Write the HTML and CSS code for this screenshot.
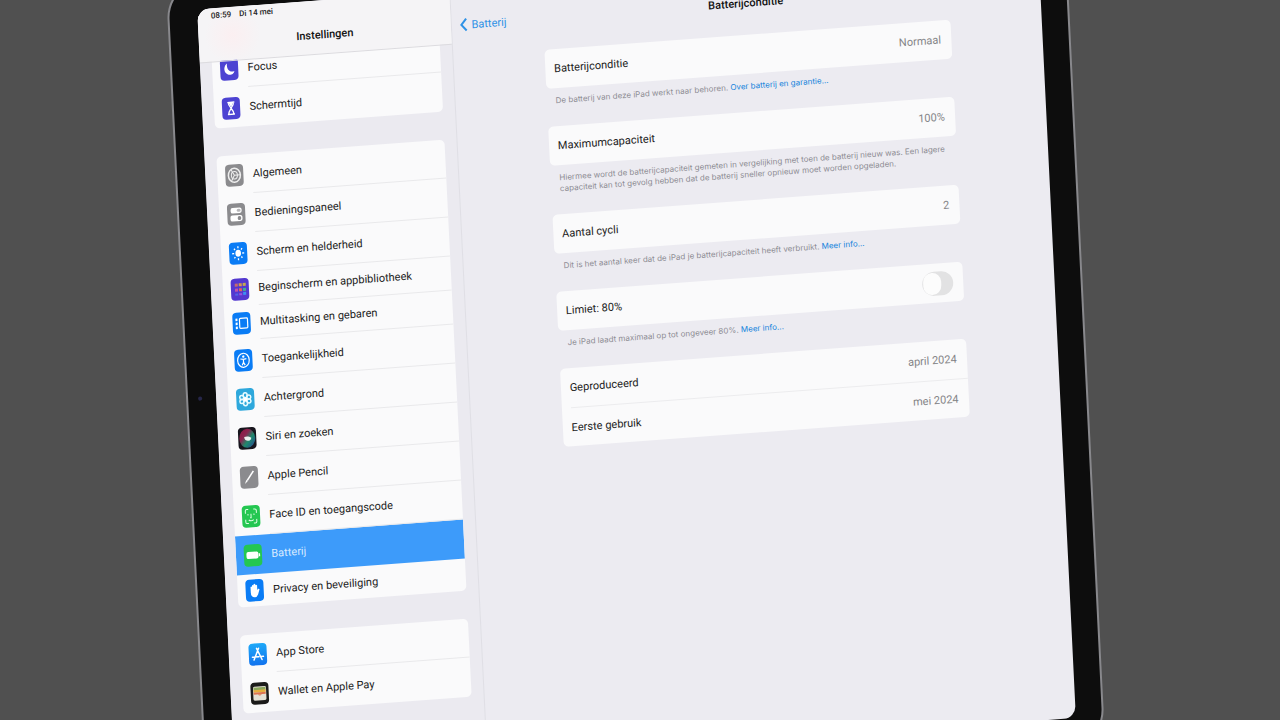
FILE: index.html
```
<!DOCTYPE html>
<html lang="nl">
<head>
    <meta charset="UTF-8">
    <meta name="viewport" content="width=device-width, initial-scale=1.0">
    <title>Batterijconditie</title>
    <link rel="stylesheet" href="styles.css">
</head>
<body>
    <div class="stage">
        <div class="device">
            <div class="screen">
                <aside class="sidebar">
                    <header class="sidebar-header">
                        <div class="status"><span>08:59</span><span>Di 14 mei</span></div>
                        <h2>Instellingen</h2>
                    </header>
                    <nav class="menu">
                        <div class="group">
                            <a class="item" href="#">
                                <svg class="icon indigo" viewBox="0 0 18 22"><path d="M7 5c-3 2-4 7-1 10 3 3 8 1 8-2-4 2-8-2-7-8z" fill="#fff"/></svg>
                                <span>Focus</span>
                            </a>
                            <a class="item" href="#">
                                <svg class="icon indigo" viewBox="0 0 18 22"><path d="M5.500 5h7M5.500 17h7M6.500 5.500c0 3 2 4 2.500 5.500-.5 1.500-2.500 2.500-2.500 5.500M11.500 5.500c0 3-2 4-2.500 5.500.5 1.500 2.500 2.500 2.500 5.500" fill="none" stroke="#fff" stroke-width="1.300"/><path d="M6.500 5h5L9.500 9h-1z" fill="#fff"/></svg>
                                <span>Schermtijd</span>
                            </a>
                        </div>
                        <div class="group">
                            <a class="item" href="#">
                                <svg class="icon gray" viewBox="0 0 18 22"><g fill="none" stroke="#eee"><ellipse cx="9" cy="11" rx="6" ry="7" stroke-width="1.500"/><ellipse cx="9" cy="11" rx="3" ry="3.800"/><path d="M9 11h6M9 11L6 5.500M9 11l-3 5.500"/></g></svg>
                                <span>Algemeen</span>
                            </a>
                            <a class="item" href="#">
                                <svg class="icon gray" viewBox="0 0 18 22"><rect x="3.500" y="4.500" width="11" height="5.500" rx="2" fill="#fff"/><ellipse cx="11.500" cy="7.200" rx="2" ry="1.500" fill="#b5b5b8"/><rect x="3" y="12" width="12" height="6" rx="2" fill="#fff"/><ellipse cx="12" cy="15" rx="1.800" ry="2" fill="#8b8b8e"/></svg>
                                <span>Bedieningspaneel</span>
                            </a>
                            <a class="item" href="#">
                                <svg class="icon blue" viewBox="0 0 18 22"><ellipse cx="9" cy="11" rx="2.800" ry="3.500" fill="#fff"/><path d="M9 4v2M9 16v2M3 11h2M13 11h2M5 6.200l1 1.300M13 6.200l-1 1.300M5 15.800l1-1.300M13 15.800l-1-1.300" stroke="#fff" stroke-width="1.300"/></svg>
                                <span>Scherm en helderheid</span>
                            </a>
                            <a class="item short" href="#">
                                <svg class="icon violet" viewBox="0 0 18 22"><path d="M4 5h3v3H4z" fill="#c76b6b"/><path d="M8 5h3v3H8z" fill="#d69a4c"/><path d="M12 5h3v3h-3z" fill="#c2a850"/><path d="M4 10h3v3H4z" fill="#c354a8"/><path d="M8 10h3v3H8z" fill="#e0645c"/><path d="M12 10h3v3h-3z" fill="#3fae8f"/><path d="M4 15h3v2H4z" fill="#5065e8"/><path d="M8 15h3v2H8z" fill="#9a50e0"/><path d="M12 14h3v3h-3z" fill="#3e8df2"/></svg>
                                <span>Beginscherm en appbibliotheek</span>
                            </a>
                            <a class="item short" href="#">
                                <svg class="icon blue" viewBox="0 0 18 22"><rect x="7" y="6" width="8" height="10" rx="1" fill="none" stroke="#fff" stroke-width="1.200"/><path d="M3 6h2v2.500H3zM3 10h2v2.500H3zM3 14h2v2.500H3z" fill="#fff"/></svg>
                                <span>Multitasking en gebaren</span>
                            </a>
                            <a class="item" href="#">
                                <svg class="icon blue" viewBox="0 0 18 22"><ellipse cx="9" cy="11" rx="5.800" ry="7" fill="none" stroke="#fff" stroke-width="1.200"/><circle cx="9" cy="7.300" r="1.200" fill="#fff"/><path d="M6 9.500l3 .5 3-.5M9 10v3l-1.500 3M9 13l1.500 3" fill="none" stroke="#fff" stroke-width="1.200"/></svg>
                                <span>Toegankelijkheid</span>
                            </a>
                            <a class="item" href="#">
                                <svg class="icon cyan" viewBox="0 0 18 22"><g fill="none" stroke="#e6fbff" stroke-width="1.500"><ellipse cx="9" cy="7" rx="2" ry="2.500"/><ellipse cx="9" cy="15" rx="2" ry="2.500"/><ellipse cx="5.500" cy="9" rx="2" ry="2"/><ellipse cx="12.500" cy="9" rx="2" ry="2"/><ellipse cx="5.500" cy="13" rx="2" ry="2"/><ellipse cx="12.500" cy="13" rx="2" ry="2"/></g><circle cx="9" cy="11" r="2" fill="#fff"/></svg>
                                <span>Achtergrond</span>
                            </a>
                            <a class="item" href="#">
                                <svg class="icon dark" viewBox="0 0 18 22">
                                    <defs>
                                        <linearGradient id="siri" x1="0" y1="0" x2="1" y2="1">
                                            <stop offset="0" stop-color="#8c1440"/>
                                            <stop offset=".35" stop-color="#8a2450"/>
                                            <stop offset=".6" stop-color="#1f8a6c"/>
                                            <stop offset="1" stop-color="#28409a"/>
                                        </linearGradient>
                                    </defs>
                                    <ellipse cx="9" cy="11" rx="8" ry="9.500" fill="url(#siri)"/><path d="M6 9.500c3-1 5 0 7 1 0 2-1 3-3 3-2 0-4-1-4-4z" fill="#fff" opacity=".9"/>
                                </svg>
                                <span>Siri en zoeken</span>
                            </a>
                            <a class="item" href="#">
                                <svg class="icon gray" viewBox="0 0 18 22"><path d="M13.500 5L7 14" stroke="#fff" stroke-width="1.600"/><path d="M7.800 14.500L4.500 17.500l1.500-4z" fill="#fff"/></svg>
                                <span>Apple Pencil</span>
                            </a>
                            <a class="item" href="#">
                                <svg class="icon green" viewBox="0 0 18 22"><path d="M3.500 8V5.500Q3.500 4 5 4h1.500M11.500 4H13q1.500 0 1.500 1.500V8M3.500 14v2.500Q3.500 18 5 18h1.500M11.500 18H13q1.500 0 1.500-1.500V14M6 8.500v1.500M12 8.500v1.500M9 8.500v4H8M6.500 14.500q2.500 2 5 0" fill="none" stroke="#dfffe4"/></svg>
                                <span>Face ID en toegangscode</span>
                            </a>
                            <a class="item selected" href="#">
                                <svg class="icon green" viewBox="0 0 18 22"><rect x="2.500" y="7.500" width="12" height="7" rx="2" fill="#fff"/><path d="M15.500 9.500v3" stroke="#fff" stroke-width="1.300"/></svg>
                                <span>Batterij</span>
                            </a>
                            <a class="item last" href="#">
                                <svg class="icon blue" viewBox="0 0 18 22"><path d="M5 11V7.500q.8-.8 1.500 0V6q.8-1 1.600 0V5q.9-1 1.800 0v1q.9-.8 1.700.2V11l1-1.200q1.200-.3 1.200.8l-1.600 4.800Q11 18 9 18q-4 0-4-5z" fill="#fff"/></svg>
                                <span>Privacy en beveiliging</span>
                            </a>
                        </div>
                        <div class="group">
                            <a class="item" href="#">
                                <svg class="icon sky" viewBox="0 0 18 22"><path d="M10 5L5 16.500M8 5l5 11.500M3.500 13.500h6.500M12 13.500h2.500" fill="none" stroke="#fff" stroke-width="1.500" stroke-linecap="round"/></svg>
                                <span>App Store</span>
                            </a>
                            <a class="item" href="#">
                                <svg class="icon wallet" viewBox="0 0 18 22"><rect x="2.500" y="4" width="13" height="14" rx="1.500" fill="#e4e0d4"/><path d="M3 5h12v3H3z" fill="#8aa55c"/><path d="M3 7.500h12v2.500H3z" fill="#e5ae3c"/><path d="M3 10h12v2H3z" fill="#dc7350"/><path d="M7 12h4q-2 2.500-4 0z" fill="#dc7350"/></svg>
                                <span>Wallet en Apple Pay</span>
                            </a>
                        </div>
                    </nav>
                </aside>
                <main class="pane">
                    <header class="pane-header">
                        <a class="back" href="#"><svg viewBox="0 0 8 14"><path d="M6.500 1L1.500 7l5 6" fill="none" stroke="#2f92e6" stroke-width="2"/></svg>Batterij</a>
                        <h1>Batterijconditie</h1>
                    </header>
                    <div class="content">
                        <section class="card">
                            <div class="row"><span>Batterijconditie</span><span class="value">Normaal</span></div>
                        </section>
                        <p class="note">De batterij van deze iPad werkt naar behoren. <a href="#">Over batterij en garantie...</a></p>
                        <section class="card">
                            <div class="row"><span>Maximumcapaciteit</span><span class="value">100%</span></div>
                        </section>
                        <p class="note">Hiermee wordt de batterijcapaciteit gemeten in vergelijking met toen de batterij nieuw was. Een lagere capaciteit kan tot gevolg hebben dat de batterij sneller opnieuw moet worden opgeladen.</p>
                        <section class="card">
                            <div class="row"><span>Aantal cycli</span><span class="value">2</span></div>
                        </section>
                        <p class="note">Dit is het aantal keer dat de iPad je batterijcapaciteit heeft verbruikt. <a href="#">Meer info...</a></p>
                        <section class="card">
                            <div class="row"><label for="limit">Limiet: 80%</label><input class="switch" type="checkbox" id="limit"></div>
                        </section>
                        <p class="note">Je iPad laadt maximaal op tot ongeveer 80%. <a href="#">Meer info...</a></p>
                        <section class="card">
                            <div class="row"><span>Geproduceerd</span><span class="value">april 2024</span></div>
                            <div class="row"><span>Eerste gebruik</span><span class="value">mei 2024</span></div>
                        </section>
                    </div>
                </main>
            </div>
        </div>
    </div>
</body>
</html>
```
FILE: styles.css
```
* {
    box-sizing: border-box;
}
body {
    margin: 0;
    height: 100vh;
    overflow: hidden;
    background: #505050;
    font-family: Roboto, "Liberation Sans", sans-serif;
    font-size: 11px;
    color: #222;
}
a {
    color: inherit;
    text-decoration: none;
}
h1, h2 {
    margin: 0;
    font-size: 11px;
    line-height: 14px;
    font-weight: 500;
    text-align: center;
    color: #111;
}

/* the tablet leans to the left */
.stage {
    display: flow-root;
    height: 100vh;
    transform: skew(2.8deg, -4.25deg);
    transform-origin: 0 0;
}
.device {
    position: relative;
    width: 70.2%;
    margin: -6px 0 0 13%;
    padding: 28px 26px 28px 28px;
    border: 2px solid #88888c;
    border-radius: 38px;
    background: #0d0d0d;
}
/* camera */
.device::before {
    content: "";
    position: absolute;
    left: 10px;
    top: 50%;
    width: 4px;
    height: 4px;
    border-radius: 50%;
    background: #26264a;
}
.screen {
    display: flex;
    min-height: 771px;
    border-radius: 12px;
    overflow: hidden;
    background: #ecebf1;
}

.sidebar {
    width: 30%;
    flex: none;
    border-right: 1px solid #e0dfe5;
    background: #ebeaf0;
}
.sidebar-header {
    position: relative;
    z-index: 1;
    height: 54px;
    border-bottom: 1px solid #dcdbdf;
    background: radial-gradient(circle at 34px 28px, #fbeff1, #f5f4f6 28px);
}
.status {
    display: flex;
    gap: 8px;
    height: 28px;
    padding: 3px 13px 0;
    font-size: 8px;
    line-height: 10px;
    font-weight: 500;
}
.menu {
    margin-top: -12px;
    padding: 0 12px;
}
.group {
    margin-bottom: 28px;
    border-radius: 5px;
    overflow: hidden;
    background: #fafafb;
}
.item {
    display: flex;
    align-items: center;
    height: 39px;
    padding-left: 8px;
}
.item span {
    display: flex;
    flex: 1;
    align-items: center;
    align-self: stretch;
    margin-left: 9px;
    border-bottom: 1px solid #e9e9eb;
    white-space: nowrap;
}
.item:last-child span {
    border-bottom: 0;
}
.item.short {
    height: 34px;
}
.item.last {
    height: 32px;
}
.item.selected {
    background: #3d9bfa;
    color: #d8eaff;
}
.item.selected span {
    border-color: transparent;
}
.icon {
    width: 18px;
    height: 22px;
    border-radius: 4px;
}
.indigo { background: #4d43d2; }
.gray { background: #8b8b8e; }
.blue { background: #0a7cf5; }
.violet { background: #5338cf; }
.cyan { background: #2ea8dc; }
.dark { background: #17151d; }
.green { background: #24c751; }
.sky { background: linear-gradient(#1ea9f8, #1273ee); }
.wallet { background: #1b1b1a; }

.pane {
    flex: 1;
}
.pane-header {
    display: grid;
    grid-template-columns: 1fr auto 1fr;
    align-items: center;
    height: 66px;
    padding: 4px 8px 0;
}
.back {
    display: flex;
    align-items: center;
    gap: 4px;
    color: #2f92e6;
}
.back svg {
    width: 8px;
    height: 14px;
}
.content {
    width: 69%;
    margin: 0 auto;
}
.card {
    border-radius: 5px;
    background: #fafafb;
}
.row {
    display: flex;
    align-items: center;
    justify-content: space-between;
    height: 39px;
    margin-left: 9px;
    padding-right: 10px;
}
.row + .row {
    border-top: 1px solid #ececee;
}
.value {
    color: #858588;
}
.note {
    margin: 0;
    padding: 7px 4px 20px 9px;
    font-family: Inter, Roboto, sans-serif;
    font-size: 8px;
    line-height: 11px;
    color: #8c8c93;
}
.note a {
    color: #1583dc;
}
.switch {
    appearance: none;
    width: 31px;
    height: 24px;
    margin: 0;
    padding: 1px;
    border-radius: 12px;
    background: #e2e2e3;
}
.switch::before {
    content: "";
    display: block;
    width: 18px;
    height: 22px;
    border-radius: 10px;
    background: #fcfcfc;
}
.switch:checked {
    background: #34c759;
}
.switch:checked::before {
    margin-left: 11px;
}
```
